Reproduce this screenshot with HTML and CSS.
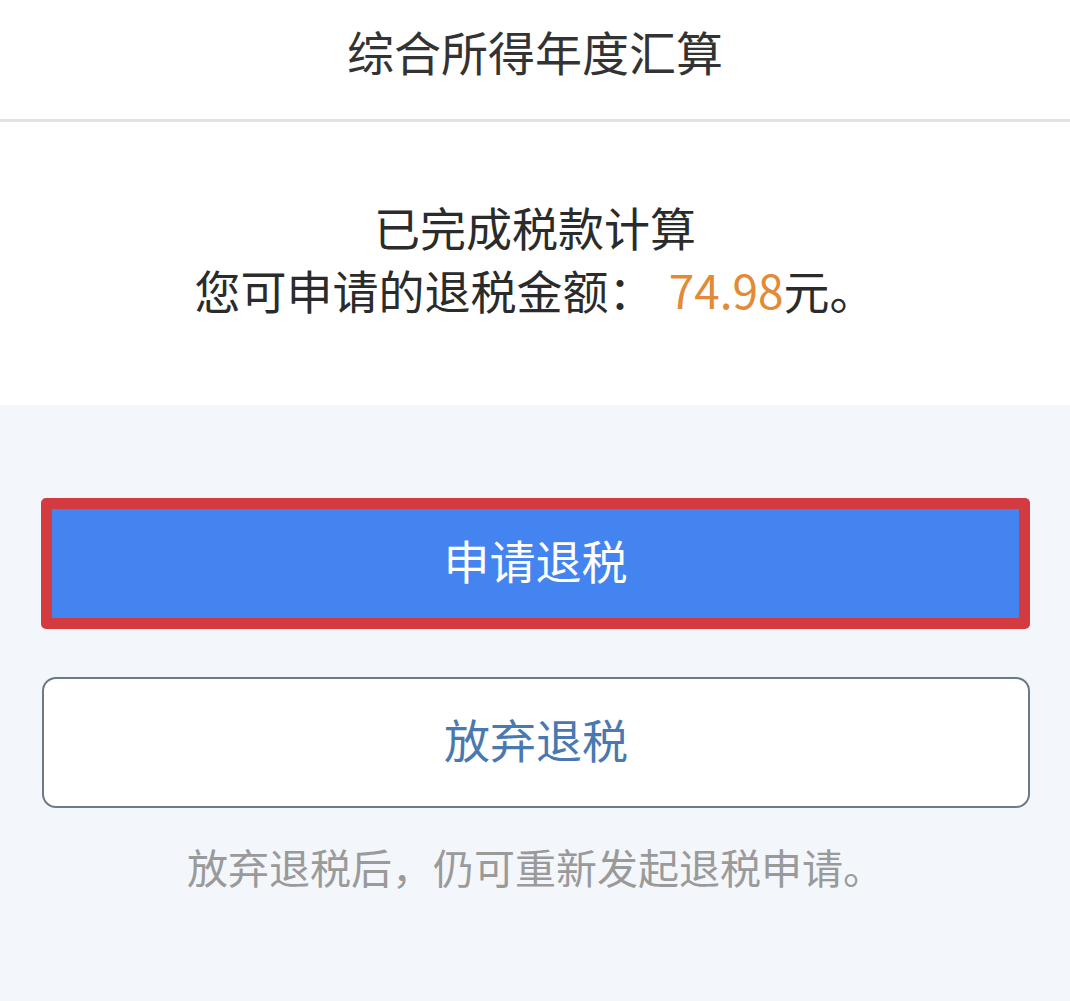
FILE: index.html
```html
<!DOCTYPE html>
<html lang="zh-CN">
<head>
<meta charset="utf-8">
<title>综合所得年度汇算</title>
<link rel="stylesheet" href="styles.css">
</head>
<body>
  <header class="topbar">
    <h1 class="title">综合所得年度汇算</h1>
  </header>
  <section class="summary">
    <p class="line">已完成税款计算</p>
    <p class="line">您可申请的退税金额： <span class="amount">74.98</span>元。</p>
  </section>
  <section class="actions">
    <button class="btn btn-primary">申请退税</button>
    <button class="btn btn-outline">放弃退税</button>
    <p class="note">放弃退税后，仍可重新发起退税申请。</p>
  </section>
</body>
</html>
```
FILE: styles.css
```css
html, body {
  margin: 0;
  padding: 0;
}
body {
  background: #f3f6fa;
  font-family: "Noto Sans CJK SC", "Noto Sans", sans-serif;
  color: #333;
  width: 1070px;
  min-height: 1001px;
}
.topbar {
  background: #fff;
  height: 119px;
  border-bottom: 3px solid #e2e2e2;
  display: flex;
  align-items: center;
  justify-content: center;
}
.title {
  margin: 0 0 18px 0;
  font-size: 47px;
  font-weight: 400;
  color: #333;
  line-height: 1;
}
.summary {
  background: #fff;
  height: 283px;
  box-sizing: border-box;
  padding-top: 73px;
  text-align: center;
}
.line {
  margin: 0;
  font-size: 46px;
  line-height: 63px;
  color: #2b2b2b;
}
.amount {
  color: #e38a36;
  margin-left: 4px;
}
.actions {
  padding: 93px 40px 0 41px;
  display: flex;
  flex-direction: column;
}
.btn {
  font-family: inherit;
  font-size: 46px;
  line-height: 1;
  height: 131px;
  width: 989px;
  box-sizing: border-box;
  cursor: pointer;
  padding: 0 0 9px 0;
}
.btn-primary {
  background: #4384f0;
  color: #fff;
  border: 11px solid #d43b40;
  border-radius: 5px;
}
.btn-outline {
  margin-top: 48px;
  margin-left: 1px;
  width: 988px;
  background: #fff;
  color: #4a78b0;
  border: 2px solid #6d7a86;
  border-radius: 14px;
}
.note {
  margin: 38px 0 0 0;
  text-align: center;
  font-size: 41px;
  line-height: 41px;
  color: #9a9a9a;
}
```
